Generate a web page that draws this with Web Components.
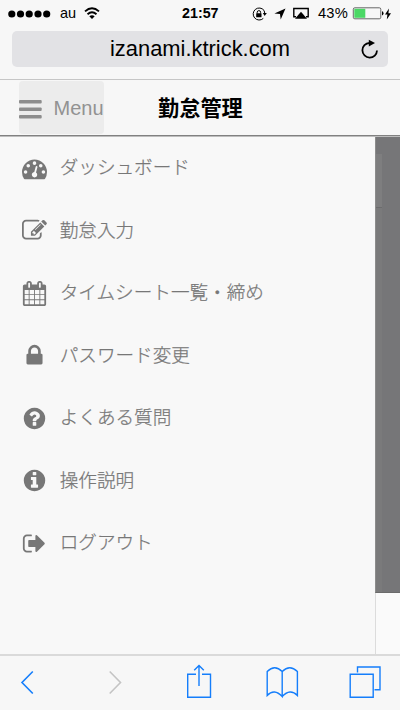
<!DOCTYPE html>
<html lang="ja">
<head>
<meta charset="utf-8">
<title>勤怠管理</title>
<style>
html,body{margin:0;height:100%;background:#f7f7f7}
body{font-family:"Liberation Sans","Noto Sans CJK JP",sans-serif;overflow:hidden}
</style>
</head>
<body>
<phone-screen>
  <status-bar slot="top"></status-bar>
  <address-bar slot="top">izanami.ktrick.com</address-bar>
  <page-header slot="top"><span slot="menu">Menu</span>勤怠管理</page-header>
  <menu-item icon="tachometer">ダッシュボード</menu-item>
  <menu-item icon="edit">勤怠入力</menu-item>
  <menu-item icon="calendar">タイムシート一覧・締め</menu-item>
  <menu-item icon="lock">パスワード変更</menu-item>
  <menu-item icon="question">よくある質問</menu-item>
  <menu-item icon="info">操作説明</menu-item>
  <menu-item icon="signout">ログアウト</menu-item>
  <tool-bar slot="bottom"></tool-bar>
</phone-screen>
<script>
const define = (name, html) => customElements.define(name, class extends HTMLElement {
  constructor() {
    super();
    const t = document.createElement('template');
    t.innerHTML = typeof html === 'function' ? html(this) : html;
    this.attachShadow({mode: 'open'}).append(t.content.cloneNode(true));
  }
});

const disc = 'M1664 896q0 209-103 385.5t-279.5 279.5-385.5 103-385.5-103-279.5-279.5-103-385.5 103-385.5 279.5-279.5 385.5-103 385.5 103 279.5 279.5 103 385.5z';
const dot = (x, y) => `M${x + 128} ${y}a128 128 0 1 0-256 0a128 128 0 1 0 256 0z`;
const icons = {
  tachometer: dot(256,1152) + dot(448,704) + dot(896,512) + dot(1344,704) + dot(1536,1152) +
    'M1004 1185l101-382q6-26-7.5-48.5t-38.5-29.5-48 6.5-30 39.5l-101 382q-60 5-107 43.5t-63 98.5q-20 77 20 146t117 89 146-20 89-117q16-60-6-117t-72-91zM1792 1152q0 261-141 483-19 29-54 29h-1402q-35 0-54-29-141-221-141-483 0-182 71-348t191-286 286-191 348-71 348 71 286 191 191 286 71 348z',
  edit: 'M888 1184l116-116-152-152-116 116v56h96v96h56zm440-720q-16-16-33 1l-350 350q-17 17-1 33t33-1l350-350q17-17 1-33zm80 594v190q0 119-84.5 203.5t-203.5 84.5h-832q-119 0-203.5-84.5t-84.5-203.5v-832q0-119 84.5-203.5t203.5-84.5h832q63 0 117 25 15 7 18 23 3 17-9 29l-49 49q-14 14-32 8-23-6-45-6h-832q-66 0-113 47t-47 113v832q0 66 47 113t113 47h832q66 0 113-47t47-113v-126q0-13 9-22l64-64q15-15 35-7t20 29zm-96-738l288 288-672 672h-288v-288zm444 132l-92 92-288-288 92-92q28-28 68-28t68 28l152 152q28 28 28 68t-28 68z',
  calendar: 'M192 1664h288v-288h-288zM544 1664h320v-288h-320zM928 1664h320v-288h-320zM1312 1664h288v-288h-288zM192 1312h288v-320h-288zM544 1312h320v-320h-320zM928 1312h320v-320h-320zM1312 1312h288v-320h-288zM192 928h288v-288h-288zM544 928h320v-288h-320zM928 928h320v-288h-320zM1312 928h288v-288h-288zM576 448v-288q0-13-9.500-22.500t-22.500-9.500h-64q-13 0-22.500 9.500t-9.500 22.500v288q0 13 9.500 22.500t22.500 9.500h64q13 0 22.500-9.500t9.500-22.500zM1344 448v-288q0-13-9.500-22.500t-22.500-9.500h-64q-13 0-22.500 9.500t-9.500 22.500v288q0 13 9.500 22.500t22.500 9.500h64q13 0 22.500-9.500t9.500-22.500zM1728 384v1280q0 52-38 90t-90 38h-1408q-52 0-90-38t-38-90v-1280q0-52 38-90t90-38h128v-96q0-66 47-113t113-47h64q66 0 113 47t47 113v96h384v-96q0-66 47-113t113-47h64q66 0 113 47t47 113v96h128q52 0 90 38t38 90z',
  lock: 'M640 768h512v-192q0-106-75-181t-181-75-181 75-75 181v192zm832 96v576q0 40-28 68t-68 28h-960q-40 0-68-28t-28-68v-576q0-40 28-68t68-28h32v-192q0-184 132-316t316-132 316 132 132 316v192h32q40 0 68 28t28 68z',
  question: 'M1024 1376v-192q0-14-9-23t-23-9h-192q-14 0-23 9t-9 23v192q0 14 9 23t23 9h192q14 0 23-9t9-23zm256-672q0-88-55.5-163t-138.5-116-170-41q-243 0-371 213-15 24 8 42l132 100q7 6 19 6 16 0 25-12 53-68 86-92 34-24 86-24 48 0 85.5 26t37.5 59q0 38-20 61t-68 45q-63 28-115.5 86.5t-52.5 125.5v36q0 14 9 23t23 9h192q14 0 23-9t9-23q0-19 21.5-49.5t54.500-49.500q32-18 49-28.500t46-35 44.500-48 28-60.500 12.500-81z' + disc,
  info: 'M1152 1376v-160q0-14-9-23t-23-9h-96v-512q0-14-9-23t-23-9h-320q-14 0-23 9t-9 23v160q0 14 9 23t23 9h96v320h-96q-14 0-23 9t-9 23v160q0 14 9 23t23 9h448q14 0 23-9t9-23zm-128-896v-160q0-14-9-23t-23-9h-192q-14 0-23 9t-9 23v160q0 14 9 23t23 9h192q14 0 23-9t9-23z' + disc,
  signout: 'M704 1440q0 4 1 20t.5 26.5-3 23.5-10 19.5-20.5 6.5h-320q-119 0-203.5-84.5t-84.5-203.5v-704q0-119 84.5-203.5t203.5-84.5h320q13 0 22.5 9.5t9.5 22.5q0 4 1 20t.5 26.5-3 23.5-10 19.5-20.5 6.5h-320q-66 0-113 47t-47 113v704q0 66 47 113t113 47h312l11.5 1 11.5 3 8 5.5 7 9 2 13.5zm928-544q0 26-19 45l-544 544q-19 19-45 19t-45-19-19-45v-288h-448q-26 0-45-19t-19-45v-384q0-26 19-45t45-19h448v-288q0-26 19-45t45-19 45 19l544 544q19 19 19 45z'
};

define('phone-screen', `<style>
:host{display:flex;flex-direction:column;width:400px;height:710px;background:#f7f7f7;overflow:hidden}
main{flex:1;display:grid;grid-template-columns:375px 25px;min-height:0}
nav{background:#f8f8f8;display:flex;flex-direction:column}
aside{border-left:1px solid #dcdcdc;background:#fafafa;display:flex;flex-direction:column}
.shade{height:457px;background:#767678;border-bottom:1px solid #6b6b6b;box-sizing:border-box;margin-left:-1px;border-left:1px solid #8c8c8c;padding-top:18px}
.card{width:6px;height:53px;background:#7e7e7f;border-bottom:1px solid #6c6c6d}
.rest{width:6px;height:384px;background:#7a7a7b}
</style><slot name="top"></slot>
<main><nav><slot></slot></nav><aside><div class="shade"><div class="card"></div><div class="rest"></div></div></aside></main>
<slot name="bottom"></slot>`);

define('status-bar', `<style>
:host{display:grid;grid-template-columns:52px 24px 106px 70px 22px 19px 24px 35px 32px 16px;align-items:center;height:27px;color:#000;font-size:14.500px;white-space:nowrap}
svg{display:block}.signal{margin-left:8px}.time{font-weight:bold;font-size:14.300px}.au{padding-left:8px}
.time,.au,.charge{margin-top:-1px}
.charge{font-size:14.700px;padding-left:1px;letter-spacing:.2px}
</style>
<svg class="signal" width="44" height="10"><g><circle cx="3.800" cy="5" r="3.600"/><circle cx="12.500" cy="5" r="3.600"/><circle cx="21.200" cy="5" r="3.600"/><circle cx="30" cy="5" r="3.600"/><circle cx="38.700" cy="5" r="3.600"/></g></svg>
<span class="au">au</span>
<svg style="margin-left:8px" width="17" height="13" viewBox="0 0 17 13" fill="none" stroke="#000" stroke-width="1.900"><path d="M1 4.400Q8 -1.700 15 4.400M3.500 7.200Q8 3.400 12.500 7.200"/><path d="M8 12L5.300 9.200Q8 7.300 10.700 9.200Z" fill="#000" stroke="none"/></svg>
<span class="time">21:57</span>
<svg width="15" height="14" viewBox="0 0 15 14"><path d="M12 3.400A6 6 0 1 0 11.300 11.400" fill="none" stroke="#000" stroke-width="1"/><path d="M10.800 6h4L12.700 9z"/><path d="M12.700 7Q12.700 4.800 12 3.400" fill="none" stroke="#000"/><rect x="4.200" y="6.300" width="5.300" height="4" rx=".4"/><path d="M5.200 6.500V5.300a1.700 1.700 0 0 1 3.400 0v1.200" fill="none" stroke="#000"/></svg>
<svg width="12" height="12" viewBox="0 0 12 12"><path d="M11.500.5L6.700 11.500L6 6L.4 5.400Z"/></svg>
<svg style="margin-top:-2px" width="16" height="12" viewBox="0 0 16 12"><path d="M3 9.700H.8V1.500H15.200V9.700H13" fill="none" stroke="#000" stroke-width="1.400"/><path d="M8 4.800L14 11.700H2Z"/></svg>
<span class="charge">43%</span>
<svg width="32" height="13" viewBox="0 0 32 13"><rect x="1.300" y=".8" width="27.500" height="11" rx="1.500" fill="none" stroke="#444" stroke-width=".8"/><rect x="2.300" y="1.800" width="11" height="9" fill="#4bd865"/><path d="M30 4.200q1.500.2 1.500 2.100t-1.500 2.100z"/></svg>
<svg width="8" height="12" viewBox="0 0 8 12"><path d="M5 .5L1 6.600H3.400L2.800 11.500L7 5.200H4.400Z"/></svg>`);

define('address-bar', `<style>
:host{display:block;height:53px;padding:4px 12px 0;box-sizing:border-box;border-bottom:1px solid #c6c6c6}
div{height:36px;border-radius:5px;background:#e2e2e5;display:grid;grid-template-columns:1fr 180px 1fr;align-items:center;font-size:21.900px;color:#000;white-space:nowrap}
span{grid-column:2}svg{justify-self:end;margin-right:9px;display:block}
</style><div><span><slot></slot></span><svg width="19" height="21" viewBox="0 0 19 21"><path d="M9.500 4A7.300 7.300 0 1 0 17 11.500" fill="none" stroke="#000" stroke-width="1.800"/><path d="M8.800.7L15 4L8.800 7.500Z"/></svg></div>`);

define('page-header', `<style>
:host{display:grid;grid-template-columns:19px 85px 54px 1fr;height:56px;box-sizing:border-box;padding-top:1px;border-bottom:1px solid #818181;box-shadow:0 1px 0 #bdbdbd;position:relative;background:#f7f7f7}
.menu{grid-column:2;height:53px;border-radius:4px;background:#ececec;color:#929292;font-size:20px;display:flex;align-items:center;gap:11.500px}
.menu span{line-height:53px;padding-top:2px}
svg{display:block;margin-top:3px}
h1{grid-column:4;margin:0;font:700 21.200px/51px "Noto Sans CJK JP",sans-serif;color:#000}
</style><div class="menu"><svg width="23" height="20" fill="#8d8d8d"><rect y="1" width="22.700" height="3.600" rx="1"/><rect y="8.400" width="22.700" height="3.600" rx="1"/><rect y="15.900" width="22.700" height="3.600" rx="1"/></svg><span><slot name="menu"></slot></span></div><h1><slot></slot></h1>`);

define('menu-item', el => `<style>
:host{display:flex;align-items:center;height:62.500px;padding-left:21.700px;gap:13px;color:#777;font:300 18.600px/28px "Noto Sans CJK JP",sans-serif;white-space:nowrap}
svg{display:block;margin-top:2px;overflow:visible}
span{margin-top:-2px;-webkit-text-stroke:.25px #777}
</style><svg width="25" height="25" viewBox="0 0 1792 1792" fill="#777" fill-rule="evenodd"><path d="${icons[el.getAttribute('icon')]}"/></svg><span><slot></slot></span>`);

define('tool-bar', `<style>
:host{display:grid;grid-template-columns:55px 117px 55px 111px 62px;height:56px;box-sizing:border-box;border-top:2px solid #dadada;background:#f7f7f7}
svg{display:block;margin:auto;fill:none;stroke:#157efb;stroke-width:1.400}
</style>
<svg width="55" height="54"><path d="M32.800 15.500L22 26.500L32.800 37.500" stroke-width="1.600"/></svg>
<svg width="117" height="54"><path d="M54.700 15.500L65.500 26.500L54.700 37.500" stroke="#c4c4c4" stroke-width="1.600"/></svg>
<svg width="55" height="54"><path d="M24 18.200H15.700V41.200H38.500V18.200H30M27 30V10M22.200 14.300L27 9.500L31.800 14.300"/></svg>
<svg width="111" height="54"><path d="M55.200 15.500V40.500Q47.200 32 40.200 39.500V15.500Q47.700 8 55.200 15.500Q62.700 8 70.400 15.500V39.500Q63.200 32 55.200 40.500"/></svg>
<svg width="62" height="54"><path d="M12.200 18.200H35.200V41.200H12.200ZM19.500 16.500V11H42V33.800H36.500"/></svg>`);
</script>
</body>
</html>
